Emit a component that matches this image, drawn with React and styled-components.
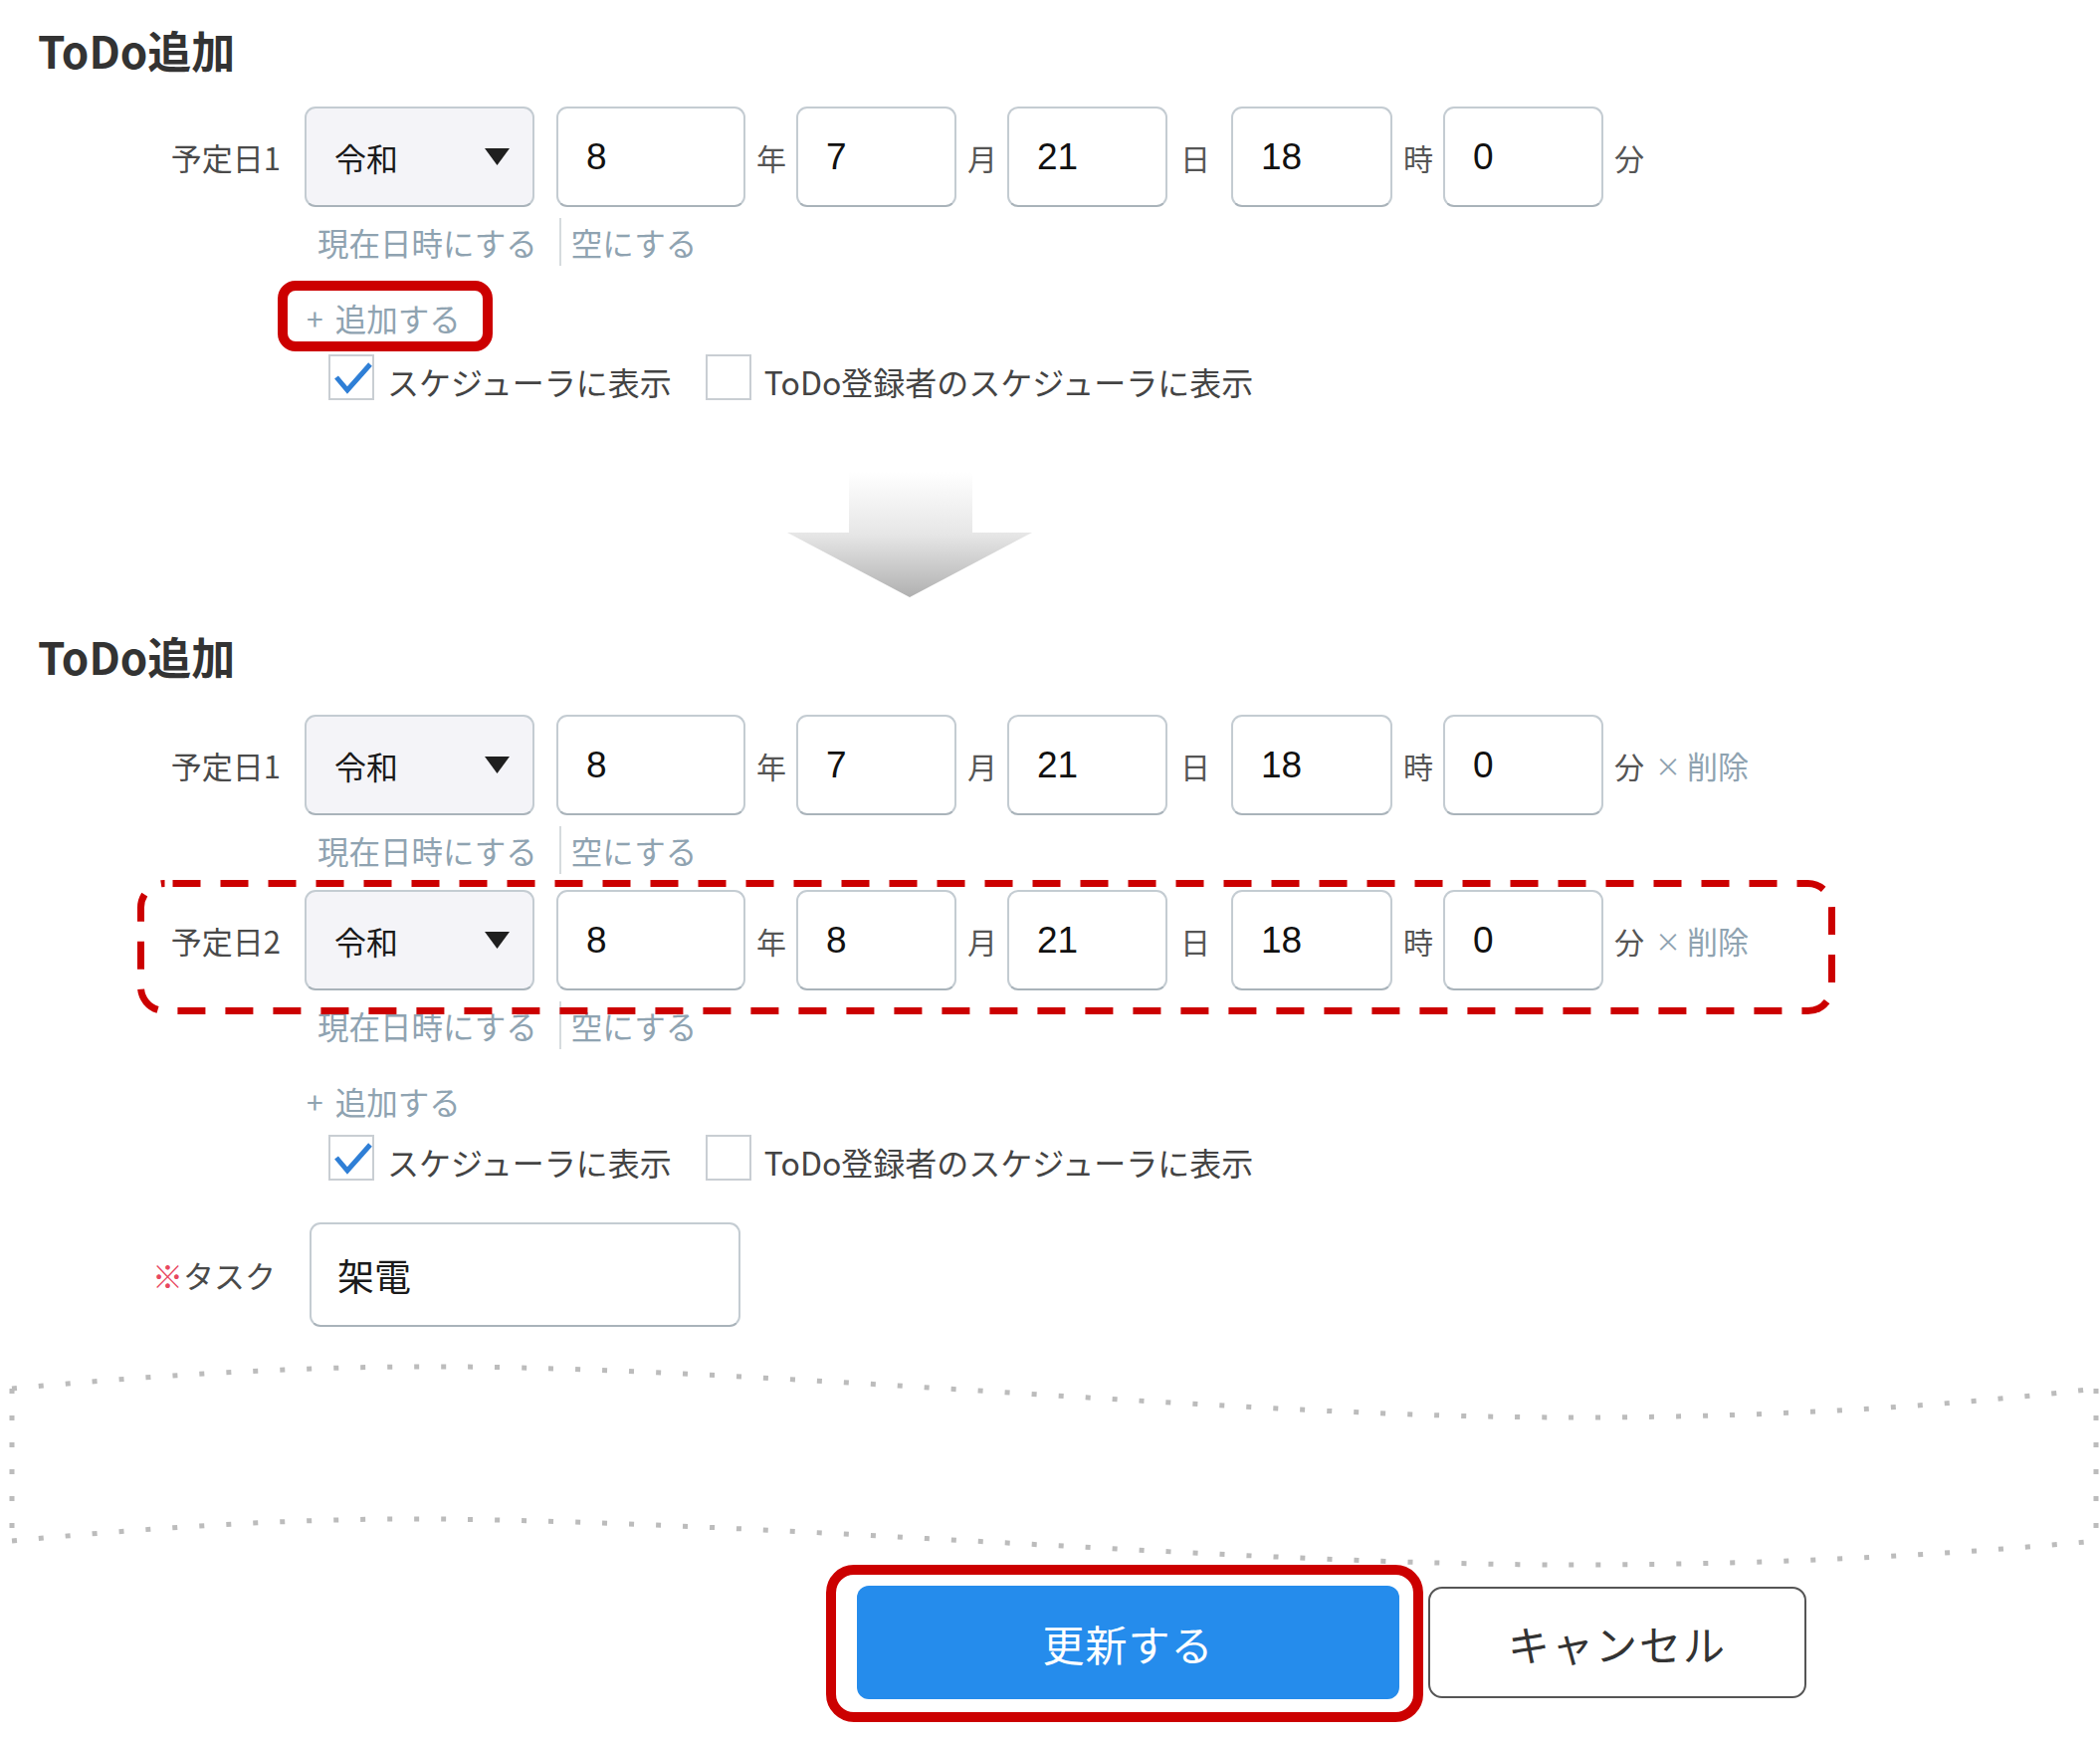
import React from 'react';
import styled, { createGlobalStyle } from 'styled-components';

const JP = `"Noto Sans CJK JP", "Noto Sans", sans-serif`;
const NUM = `"Liberation Sans", Arial, "Noto Sans CJK JP", sans-serif`;

const GlobalStyle = createGlobalStyle`
  html, body { margin: 0; padding: 0; background: #fff; overflow: hidden; }
  body { font-family: ${JP}; color: #444; }
  * { box-sizing: border-box; }
`;

const Page = styled.div`
  width: 2110px;
  height: 1746px;
  display: flex;
  flex-direction: column;
  align-items: flex-start;
`;

const Title = styled.h2`
  margin: ${p => (p.$first ? 25 : 34)}px 0 0 38px;
  font-family: ${JP};
  font-size: 44px;
  line-height: 50px;
  font-weight: 700;
  color: #333;
`;

const Field = styled.div`
  position: relative;
  display: grid;
  grid-template-columns: 282px auto;
  column-gap: 24px;
  align-items: start;
  margin-top: ${p => p.$mt}px;
`;

const FieldLabel = styled.div`
  text-align: right;
  padding-right: ${p => p.$pr || 0}px;
  font-family: ${JP};
  font-size: 31px;
  line-height: ${p => p.$h}px;
  color: #4a4a4a;
  white-space: nowrap;
`;

const Required = styled.span`
  color: #e8475f;
`;

const FieldBody = styled.div`
  display: flex;
  flex-direction: column;
`;

const DateLine = styled.div`
  display: flex;
  align-items: center;
  height: 101px;
`;

const EraSelect = styled.div`
  width: 231px;
  height: 101px;
  margin-right: 22px;
  display: flex;
  align-items: center;
  justify-content: space-between;
  padding: 0 23px 0 28px;
  background: #f4f4f8;
  border: 2px solid #c4ccd2;
  border-bottom-color: #a9b3ba;
  border-radius: 11px;
  font-family: ${JP};
  font-size: 32px;
  color: #1a1a1a;
`;

const NumBox = styled.div`
  width: ${p => p.$w}px;
  height: 101px;
  display: flex;
  align-items: center;
  padding-left: 28px;
  background: #fff;
  border: 2px solid #c4ccd2;
  border-bottom-color: #a9b3ba;
  border-radius: 11px;
  font-family: ${NUM};
  font-size: 37px;
  color: #111;
`;

const Unit = styled.span`
  margin: 0 ${p => (p.$wide ? 21 : 10)}px 0 ${p => (p.$wide ? 13 : 11)}px;
  font-family: ${JP};
  font-size: 30px;
  line-height: 1;
  color: #555;
`;

const DeleteLink = styled.span`
  display: flex;
  align-items: center;
  margin-left: 1px;
  font-family: ${JP};
  font-size: 31px;
  line-height: 1;
  color: #8fa3b1;
  white-space: nowrap;
`;

const Times = styled.span`
  font-size: 26px;
  margin-right: 6px;
`;

const QuickLinks = styled.div`
  display: flex;
  height: 48px;
  margin-top: 11px;
  padding-left: 13px;
`;

const QuickLink = styled.span`
  font-family: ${JP};
  font-size: 31.5px;
  line-height: 48px;
  color: #8fa3b1;
  white-space: nowrap;
`;

const LinkDivider = styled.span`
  width: 2px;
  background: #d6dbde;
  margin: 0 10px 0 22px;
`;

const DashedFrame = styled.svg`
  position: absolute;
  left: 138px;
  top: -10px;
  z-index: 2;
  pointer-events: none;
  overflow: visible;
`;

const AddLink = styled.span`
  position: relative;
  display: inline-flex;
  align-items: center;
  margin: 30px 0 0 308px;
  font-family: ${JP};
  font-size: 31.5px;
  line-height: 44px;
  color: #8fa3b1;
  white-space: nowrap;
`;

const Plus = styled.span`
  display: inline-block;
  font-size: 30px;
  margin-right: 12px;
`;

const AddFrame = styled.span`
  position: absolute;
  left: -29px;
  top: -15px;
  right: -32px;
  bottom: -12px;
  border: 10px solid #cc0000;
  border-radius: 18px;
  pointer-events: none;
`;

const CheckRow = styled.div`
  display: flex;
  align-items: center;
  height: 46px;
  margin: ${p => p.$mt}px 0 0 330px;
`;

const CheckBox = styled.span`
  position: relative;
  width: 46px;
  height: 46px;
  flex: none;
  border: 2px solid #c9ced3;
  background: #fff;
`;

const CheckMark = styled.svg`
  position: absolute;
  left: -2px;
  top: -2px;
`;

const CheckText = styled.span`
  margin: 0 ${p => p.$mr || 0}px 0 13px;
  padding-top: 8px;
  font-family: ${JP};
  font-size: 32px;
  line-height: 46px;
  color: #444;
  white-space: nowrap;
`;

const Arrow = styled.svg`
  display: block;
  margin: 72px 0 0 791px;
`;

const TaskBox = styled.div`
  width: 433px;
  height: 105px;
  margin-left: 5px;
  display: flex;
  align-items: center;
  padding-left: 26px;
  border: 2px solid #c4ccd2;
  border-bottom-color: #a9b3ba;
  border-radius: 11px;
  font-family: ${JP};
  font-size: 37px;
  color: #1a1a1a;
`;

const Wave = styled.svg`
  display: block;
  margin-top: 27px;
`;

const Actions = styled.div`
  display: flex;
  align-items: center;
  gap: 29px;
  padding-left: 861px;
`;

const PrimaryWrap = styled.div`
  position: relative;
  display: flex;
`;

const PrimaryButton = styled.button`
  width: 545px;
  height: 114px;
  border: none;
  border-radius: 12px;
  background: #258cec;
  color: #fff;
  font-family: ${JP};
  font-size: 42px;
  letter-spacing: 1px;
`;

const HighlightFrame = styled.span`
  position: absolute;
  left: -31px;
  top: -21px;
  right: -24px;
  bottom: -23px;
  border: 10px solid #cc0000;
  border-radius: 28px;
  pointer-events: none;
`;

const CancelButton = styled.button`
  width: 380px;
  height: 112px;
  background: #fff;
  border: 2px solid #555;
  border-radius: 14px;
  color: #333;
  font-family: ${JP};
  font-size: 42px;
  letter-spacing: 2px;
`;

const Triangle = () => (
  <svg width="25" height="17" viewBox="0 0 25 17">
    <polygon points="0,0 25,0 12.5,17" fill="#1f1f1f" />
  </svg>
);

function DateField({ label, month, mt, removable, highlighted }) {
  return (
    <Field $mt={mt}>
      {highlighted && (
        <DashedFrame width="1706" height="135" viewBox="0 0 1706 135">
          <rect x="3.5" y="3.5" width="1699" height="128" rx="24" fill="none"
            stroke="#cc0000" strokeWidth="7" strokeDasharray="28 20" strokeDashoffset="-8" />
        </DashedFrame>
      )}
      <FieldLabel $h={101}>{label}</FieldLabel>
      <FieldBody>
        <DateLine>
          <EraSelect>令和<Triangle /></EraSelect>
          <NumBox $w={190}>8</NumBox>
          <Unit>年</Unit>
          <NumBox $w={161}>{month}</NumBox>
          <Unit>月</Unit>
          <NumBox $w={161}>21</NumBox>
          <Unit $wide>日</Unit>
          <NumBox $w={162}>18</NumBox>
          <Unit>時</Unit>
          <NumBox $w={161}>0</NumBox>
          <Unit>分</Unit>
          {removable && <DeleteLink><Times>×</Times>削除</DeleteLink>}
        </DateLine>
        <QuickLinks>
          <QuickLink>現在日時にする</QuickLink>
          <LinkDivider />
          <QuickLink>空にする</QuickLink>
        </QuickLinks>
      </FieldBody>
    </Field>
  );
}

function Checks({ mt }) {
  return (
    <CheckRow $mt={mt}>
      <CheckBox>
        <CheckMark width="46" height="46" viewBox="0 0 46 46">
          <polyline points="8,23 19,36 42,10" fill="none" stroke="#2f7fd6" strokeWidth="5" strokeLinejoin="miter" />
        </CheckMark>
      </CheckBox>
      <CheckText $mr={34}>スケジューラに表示</CheckText>
      <CheckBox />
      <CheckText>ToDo登録者のスケジューラに表示</CheckText>
    </CheckRow>
  );
}

export default function App() {
  return (
    <Page>
      <GlobalStyle />
      <Title $first>ToDo追加</Title>
      <DateField label="予定日1" month="7" mt={32} />
      <AddLink>
        <Plus>+</Plus>追加する
        <AddFrame />
      </AddLink>
      <Checks mt={15} />

      <Arrow width="246" height="126" viewBox="0 0 246 126">
        <defs>
          <linearGradient id="arrowGrad" x1="0" y1="0" x2="0" y2="1">
            <stop offset="0" stopColor="#ffffff" />
            <stop offset="0.5" stopColor="#e6e6e6" />
            <stop offset="1" stopColor="#b0b0b0" />
          </linearGradient>
        </defs>
        <polygon points="62,0 186,0 186,61 246,61 123,126 0,61 62,61" fill="url(#arrowGrad)" />
      </Arrow>

      <Title>ToDo追加</Title>
      <DateField label="予定日1" month="7" mt={34} removable />
      <DateField label="予定日2" month="8" mt={16} removable highlighted />
      <AddLink><Plus>+</Plus>追加する</AddLink>
      <Checks mt={12} />

      <Field $mt={42}>
        <FieldLabel $h={105} $pr={5}><Required>※</Required>タスク</FieldLabel>
        <TaskBox>架電</TaskBox>
      </Field>

      <Wave width="2110" height="233" viewBox="0 0 2110 233">
        <g fill="none" stroke="#bcbcbc" strokeWidth="5" strokeDasharray="5 22">
          <path d="M12,35 C150,22 300,12 458,13 C800,16 1250,64 1580,64 C1800,64 1980,50 2106,35" />
          <path d="M12,188 C150,175 290,165 440,166 C800,170 1250,212 1580,212 C1800,212 1980,200 2106,188" />
          <path d="M12,35 L12,188" />
          <path d="M2106,35 L2106,188" />
        </g>
      </Wave>

      <Actions>
        <PrimaryWrap>
          <PrimaryButton>更新する</PrimaryButton>
          <HighlightFrame />
        </PrimaryWrap>
        <CancelButton>キャンセル</CancelButton>
      </Actions>
    </Page>
  );
}
